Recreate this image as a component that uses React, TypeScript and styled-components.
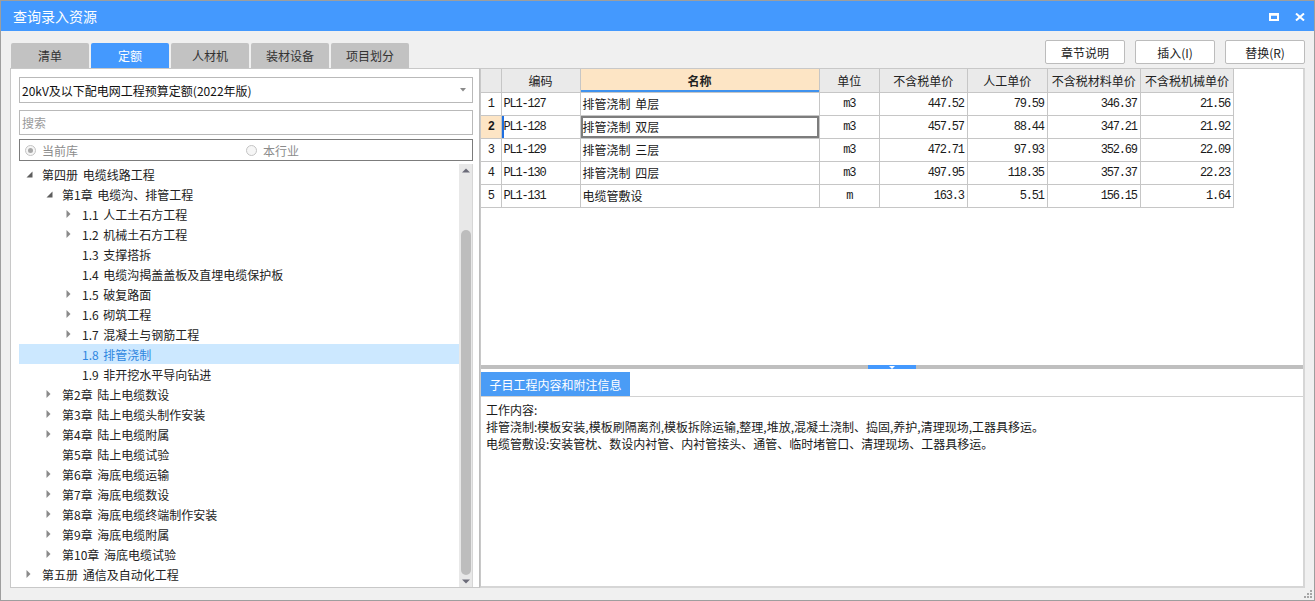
import React from 'react'
import styled, { createGlobalStyle } from 'styled-components'

const GlobalStyle = createGlobalStyle`
  html, body {
    margin: 0;
    padding: 0;
  }
  body {
    font-family: "Noto Sans CJK SC", "Noto Sans", sans-serif;
    font-size: 12px;
    color: #222;
  }
  * {
    box-sizing: border-box;
  }
`

const Window = styled.div`
  position: relative;
  width: 1315px;
  height: 601px;
  border: 1px solid #9e9e9e;
  background: #f0f0f0;
  display: flex;
  flex-direction: column;
  overflow: hidden;
`

const TitleBar = styled.div`
  height: 30px;
  flex: none;
  background: #4499fe;
  color: #fff;
  font-size: 14px;
  display: flex;
  align-items: center;
  justify-content: space-between;
  padding: 0 9px 0 12px;
`

const TitleIcons = styled.div`
  display: flex;
  align-items: center;
  gap: 16px;
  padding-top: 1px;

  svg {
    display: block;
  }
`

const Toolbar = styled.div`
  height: 37px;
  flex: none;
  display: flex;
  justify-content: space-between;
  padding: 0 9px 0 10px;
`

const Tabs = styled.div`
  display: flex;
  align-items: flex-end;
  gap: 2px;
`

const Tab = styled.div<{ $active?: boolean }>`
  width: 78px;
  height: 25px;
  display: flex;
  align-items: center;
  justify-content: center;
  border-radius: 2px 2px 0 0;
  background: ${p => (p.$active ? '#4499fe' : '#c2c2c2')};
  color: ${p => (p.$active ? '#fff' : '#333')};
  font-size: 12px;
`

const Buttons = styled.div`
  display: flex;
  gap: 10px;
  padding-top: 9px;
`

const Button = styled.div`
  width: 80px;
  height: 24px;
  background: #fff;
  border: 1px solid #bcbcbc;
  border-radius: 2px;
  display: flex;
  align-items: center;
  justify-content: center;
  font-size: 12px;
  color: #222;
`

const Main = styled.div`
  flex: 1;
  display: flex;
  padding: 0 9px 12px 9px;
  min-height: 0;
`

const LeftPanel = styled.div`
  width: 470px;
  flex: none;
  background: #fff;
  border: 1px solid #c8c8c8;
  border-right-color: #bdbdbd;
  padding: 8px 6px 0 8px;
  display: flex;
  flex-direction: column;
`

const Select = styled.div`
  height: 26px;
  border: 1px solid #b9b9b9;
  display: flex;
  align-items: center;
  justify-content: space-between;
  padding: 0 6px 0 2px;
  color: #111;
`

const Search = styled.div`
  height: 25px;
  margin-top: 7px;
  border: 1px solid #b9b9b9;
  display: flex;
  align-items: center;
  padding-left: 2px;
  color: #9a9a9a;
`

const RadioRow = styled.div`
  height: 22px;
  margin-top: 4px;
  border: 1px solid #7c7c7c;
  display: grid;
  grid-template-columns: 221px 1fr;
`

const RadioItem = styled.div`
  display: flex;
  align-items: center;
  gap: 6px;
  padding-left: 5px;
  color: #8c8c8c;
`

const RadioDot = styled.span<{ $checked?: boolean }>`
  width: 11px;
  height: 11px;
  border-radius: 50%;
  border: 1px solid #c4c4c4;
  background: #f6f6f6;
  display: flex;
  align-items: center;
  justify-content: center;

  &::after {
    content: '';
    width: 5px;
    height: 5px;
    border-radius: 50%;
    background: ${p => (p.$checked ? '#a8a8a8' : 'transparent')};
  }
`

const TreeBox = styled.div`
  flex: 1;
  display: flex;
  min-height: 0;
`

const TreeList = styled.div`
  flex: 1;
  padding-top: 3px;
`

const TreeRow = styled.div<{ $level: number; $selected?: boolean }>`
  height: 20px;
  display: flex;
  align-items: center;
  padding-left: ${p => p.$level * 20}px;
  background: ${p => (p.$selected ? '#cce8ff' : 'transparent')};
  color: ${p => (p.$selected ? '#2f86e0' : '#222')};
  white-space: pre;
  word-spacing: 2px;
`

const ArrowSlot = styled.span`
  width: 23px;
  flex: none;
  display: flex;
  align-items: center;
  padding-left: 7px;

  svg {
    display: block;
  }
`

const Scrollbar = styled.div`
  width: 14px;
  flex: none;
  margin-top: 3px;
  background: #e8e8e8;
  border-right: 1px solid #d6d6d6;
  display: flex;
  flex-direction: column;
  align-items: center;
  padding: 4px 0 3px;
`

const Thumb = styled.div`
  width: 10px;
  margin: 57px 0 4px;
  flex: 1;
  border-radius: 5px;
  background: #bdbdbd;
`

const RightPanel = styled.div`
  flex: 1;
  background: #fff;
  border-top: 1px solid #c8c8c8;
  border-left: 1px solid #c8c8c8;
  border-right: 2px solid #d6d6d6;
  border-bottom: 2px solid #d6d6d6;
  display: flex;
  flex-direction: column;
  min-width: 0;
`

const GridArea = styled.div`
  height: 296px;
  flex: none;
  overflow: hidden;
`

const Table = styled.table`
  border-collapse: collapse;
  table-layout: fixed;
  width: 753px;

  tr {
    height: 23px;
  }
`

const Th = styled.th<{ $hl?: boolean }>`
  padding: 0;
  font-weight: ${p => (p.$hl ? 700 : 400)};
  font-size: 12px;
  color: #222;
  background: ${p => (p.$hl ? '#fde5c5' : '#eaeaea')};
  border: 1px solid #c6c6c6;
  border-top: none;
  box-shadow: ${p => (p.$hl ? 'inset 0 -2px 0 #3f92ee' : 'none')};
  white-space: nowrap;
  overflow: hidden;

  &:first-child {
    border-left: none;
  }
`

const Td = styled.td<{
  $align?: 'left' | 'center' | 'right'
  $mono?: boolean
  $num?: boolean
  $current?: boolean
  $focus?: boolean
  $marker?: boolean
}>`
  padding: ${p => (p.$align === 'right' ? '0 3px 0 0' : p.$align === 'center' ? '0' : '0 0 0 2px')};
  text-align: ${p => p.$align || 'left'};
  border: 1px solid #c6c6c6;
  font-family: ${p => (p.$mono ? '"Liberation Mono", "DejaVu Sans Mono", monospace' : 'inherit')};
  font-size: 12px;
  letter-spacing: ${p => (p.$mono ? '-1.2px' : 'normal')};
  color: #1a1a1a;
  white-space: pre;
  word-spacing: ${p => (p.$mono ? 'normal' : '2px')};
  overflow: hidden;
  background: ${p => (p.$num && p.$current ? '#fde5c5' : '#fff')};
  font-weight: ${p => (p.$num && p.$current ? 700 : 400)};
  box-shadow: ${p =>
    p.$focus ? 'inset 0 0 0 2px #7d7d7d' : p.$marker ? 'inset 2px 0 0 #1f6fe0' : 'none'};

  &:first-child {
    border-left: none;
  }
`

const Splitter = styled.div`
  height: 4px;
  flex: none;
  background: #bfbfbf;
  display: flex;
  justify-content: center;
`

const SplitKnob = styled.div`
  width: 48px;
  height: 4px;
  background: #4499fe;
  display: flex;
  justify-content: center;
  align-items: flex-end;

  svg {
    display: block;
  }
`

const InfoHead = styled.div`
  margin-top: 3px;
  height: 25px;
  flex: none;
  border-bottom: 1px solid #d2d2d2;
  display: flex;
`

const InfoTab = styled.div`
  width: 149px;
  height: 24px;
  background: #4a9cf6;
  color: #fff;
  display: flex;
  align-items: center;
  justify-content: center;
  font-size: 12px;
`

const InfoBody = styled.div`
  flex: 1;
  padding: 4px 5px;
  line-height: 17px;
  color: #1a1a1a;
  white-space: nowrap;
  overflow: hidden;
`

const Grip = styled.svg`
  position: absolute;
  right: 1px;
  bottom: 1px;
`

type TreeNode = { label: string; level: number; arrow?: 'open' | 'closed'; selected?: boolean }

const tree: TreeNode[] = [
  { label: '第四册 电缆线路工程', level: 0, arrow: 'open' },
  { label: '第1章 电缆沟、排管工程', level: 1, arrow: 'open' },
  { label: '1.1 人工土石方工程', level: 2, arrow: 'closed' },
  { label: '1.2 机械土石方工程', level: 2, arrow: 'closed' },
  { label: '1.3 支撑搭拆', level: 2 },
  { label: '1.4 电缆沟揭盖盖板及直埋电缆保护板', level: 2 },
  { label: '1.5 破复路面', level: 2, arrow: 'closed' },
  { label: '1.6 砌筑工程', level: 2, arrow: 'closed' },
  { label: '1.7 混凝土与钢筋工程', level: 2, arrow: 'closed' },
  { label: '1.8 排管浇制', level: 2, selected: true },
  { label: '1.9 非开挖水平导向钻进', level: 2 },
  { label: '第2章 陆上电缆数设', level: 1, arrow: 'closed' },
  { label: '第3章 陆上电缆头制作安装', level: 1, arrow: 'closed' },
  { label: '第4章 陆上电缆附属', level: 1, arrow: 'closed' },
  { label: '第5章 陆上电缆试验', level: 1 },
  { label: '第6章 海底电缆运输', level: 1, arrow: 'closed' },
  { label: '第7章 海底电缆数设', level: 1, arrow: 'closed' },
  { label: '第8章 海底电缆终端制作安装', level: 1, arrow: 'closed' },
  { label: '第9章 海底电缆附属', level: 1, arrow: 'closed' },
  { label: '第10章 海底电缆试验', level: 1, arrow: 'closed' },
  { label: '第五册 通信及自动化工程', level: 0, arrow: 'closed' },
]

const columns = [
  { title: '', width: 20 },
  { title: '编码', width: 79 },
  { title: '名称', width: 239, hl: true },
  { title: '单位', width: 60 },
  { title: '不含税单价', width: 88 },
  { title: '人工单价', width: 80 },
  { title: '不含税材料单价', width: 93 },
  { title: '不含税机械单价', width: 93 },
]

const rows = [
  ['PL1-127', '排管浇制 单层', 'm3', '447.52', '79.59', '346.37', '21.56'],
  ['PL1-128', '排管浇制 双层', 'm3', '457.57', '88.44', '347.21', '21.92'],
  ['PL1-129', '排管浇制 三层', 'm3', '472.71', '97.93', '352.69', '22.09'],
  ['PL1-130', '排管浇制 四层', 'm3', '497.95', '118.35', '357.37', '22.23'],
  ['PL1-131', '电缆管敷设', 'm', '163.3', '5.51', '156.15', '1.64'],
]

const Arrow = ({ kind }: { kind?: 'open' | 'closed' }) => {
  if (kind === 'open')
    return (
      <svg width="7" height="7" viewBox="0 0 7 7">
        <path d="M6.5 0.5 L6.5 6.5 L0.5 6.5 Z" fill="#5e5e5e" />
      </svg>
    )
  if (kind === 'closed')
    return (
      <svg width="5" height="8" viewBox="0 0 5 8">
        <path d="M0.5 0 L4.5 4 L0.5 8 Z" fill="#8a8a8a" />
      </svg>
    )
  return null
}

const App = () => {
  return (
    <>
      <GlobalStyle />
      <Window>
        <TitleBar>
          <span>查询录入资源</span>
          <TitleIcons>
            <svg width="10" height="8" viewBox="0 0 10 8">
              <rect x="1" y="1.5" width="8" height="5.5" fill="none" stroke="#fff" strokeWidth="2" />
              <rect x="0" y="0" width="10" height="2.5" fill="#fff" />
            </svg>
            <svg width="10" height="8" viewBox="0 0 10 8">
              <path d="M1 0.5 L9 7.5 M9 0.5 L1 7.5" stroke="#fff" strokeWidth="2" />
            </svg>
          </TitleIcons>
        </TitleBar>

        <Toolbar>
          <Tabs>
            <Tab>清单</Tab>
            <Tab $active>定额</Tab>
            <Tab>人材机</Tab>
            <Tab>装材设备</Tab>
            <Tab>项目划分</Tab>
          </Tabs>
          <Buttons>
            <Button>章节说明</Button>
            <Button>插入(I)</Button>
            <Button>替换(R)</Button>
          </Buttons>
        </Toolbar>

        <Main>
          <LeftPanel>
            <Select>
              <span>20kV及以下配电网工程预算定额(2022年版)</span>
              <svg width="6" height="4" viewBox="0 0 6 4">
                <path d="M0 0 L6 0 L3 3.5 Z" fill="#8a8a8a" />
              </svg>
            </Select>
            <Search>搜索</Search>
            <RadioRow>
              <RadioItem>
                <RadioDot $checked />
                当前库
              </RadioItem>
              <RadioItem>
                <RadioDot />
                本行业
              </RadioItem>
            </RadioRow>
            <TreeBox>
              <TreeList>
                {tree.map(n => (
                  <TreeRow key={n.label} $level={n.level} $selected={n.selected}>
                    <ArrowSlot>
                      <Arrow kind={n.arrow} />
                    </ArrowSlot>
                    {n.label}
                  </TreeRow>
                ))}
              </TreeList>
              <Scrollbar>
                <svg width="8" height="5" viewBox="0 0 8 5">
                  <path d="M0 4.5 L4 0.5 L8 4.5 Z" fill="#6b6b78" />
                </svg>
                <Thumb />
                <svg width="8" height="5" viewBox="0 0 8 5">
                  <path d="M0 0.5 L8 0.5 L4 4.5 Z" fill="#6b6b78" />
                </svg>
              </Scrollbar>
            </TreeBox>
          </LeftPanel>

          <RightPanel>
            <GridArea>
              <Table>
                <colgroup>
                  {columns.map((c, i) => (
                    <col key={i} style={{ width: c.width }} />
                  ))}
                </colgroup>
                <thead>
                  <tr>
                    {columns.map((c, i) => (
                      <Th key={i} $hl={c.hl}>
                        {c.title}
                      </Th>
                    ))}
                  </tr>
                </thead>
                <tbody>
                  {rows.map((r, ri) => {
                    const current = ri === 1
                    return (
                      <tr key={r[0]}>
                        <Td $align="center" $mono $num $current={current}>
                          {ri + 1}
                        </Td>
                        <Td $mono $marker={current}>{r[0]}</Td>
                        <Td $focus={current}>{r[1]}</Td>
                        <Td $align="center" $mono>{r[2]}</Td>
                        <Td $align="right" $mono>{r[3]}</Td>
                        <Td $align="right" $mono>{r[4]}</Td>
                        <Td $align="right" $mono>{r[5]}</Td>
                        <Td $align="right" $mono>{r[6]}</Td>
                      </tr>
                    )
                  })}
                </tbody>
              </Table>
            </GridArea>
            <Splitter>
              <SplitKnob>
                <svg width="6" height="3" viewBox="0 0 6 3">
                  <path d="M0 0 L6 0 L3 3 Z" fill="#fff" />
                </svg>
              </SplitKnob>
            </Splitter>
            <InfoHead>
              <InfoTab>子目工程内容和附注信息</InfoTab>
            </InfoHead>
            <InfoBody>
              <div>工作内容:</div>
              <div>排管浇制:模板安装,模板刷隔离剂,模板拆除运输,整理,堆放,混凝土浇制、捣固,养护,清理现场,工器具移运。</div>
              <div>电缆管敷设:安装管枕、数设内衬管、内衬管接头、通管、临时堵管口、清理现场、工器具移运。</div>
            </InfoBody>
          </RightPanel>
        </Main>

        <Grip width="9" height="9" viewBox="0 0 9 9">
          <rect x="6" y="0" width="2" height="2" fill="#a6a6a6" />
          <rect x="3" y="3" width="2" height="2" fill="#a6a6a6" />
          <rect x="6" y="3" width="2" height="2" fill="#a6a6a6" />
          <rect x="0" y="6" width="2" height="2" fill="#a6a6a6" />
          <rect x="3" y="6" width="2" height="2" fill="#a6a6a6" />
          <rect x="6" y="6" width="2" height="2" fill="#a6a6a6" />
        </Grip>
      </Window>
    </>
  )
}

export default App
